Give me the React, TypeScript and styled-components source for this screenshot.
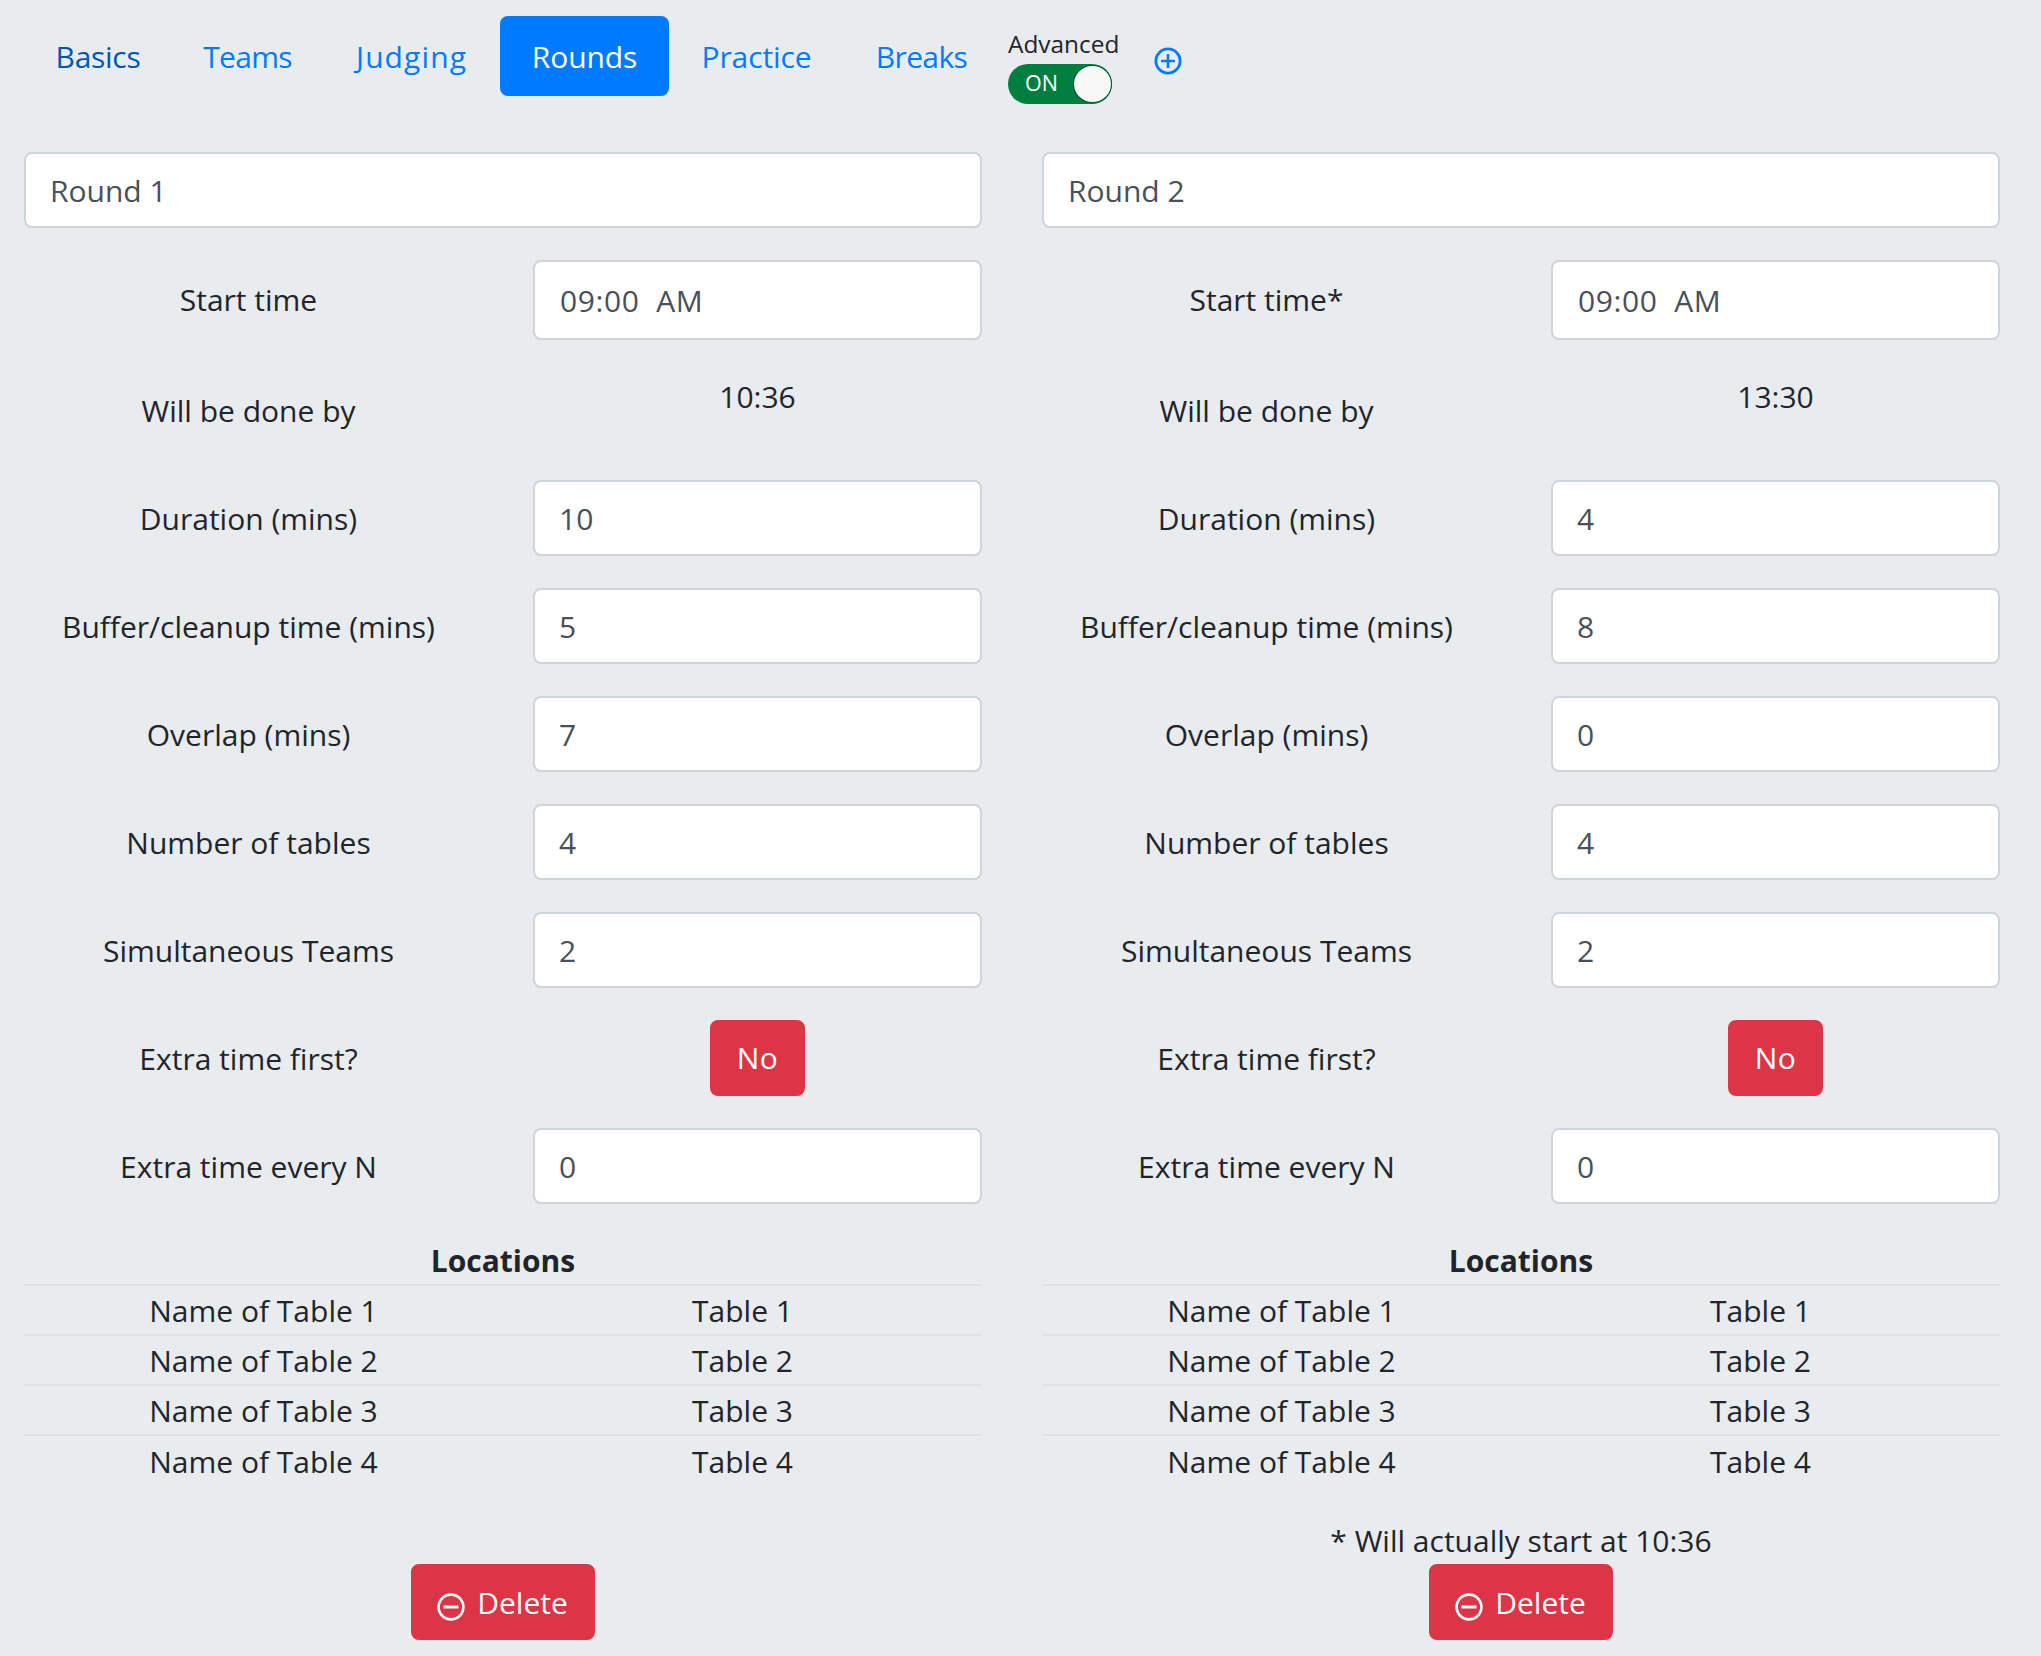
import React from "react";
import styled, { createGlobalStyle } from "styled-components";

const GlobalStyle = createGlobalStyle`
  html, body {
    margin: 0;
    padding: 0;
    background: #e9ecef;
  }
  body {
    font-family: "Open Sans", "Liberation Sans", sans-serif;
    font-size: 30px;
    line-height: 48px;
    color: #212529;
  }
  * {
    box-sizing: border-box;
  }
`;

const Page = styled.div`
  width: 2041px;
  height: 1656px;
  padding: 16px 41px 0 24px;
  overflow: hidden;
`;

const Nav = styled.nav`
  display: flex;
  align-items: flex-start;
  height: 80px;
  margin-bottom: 56px;
`;

const NavLink = styled.a<{ $active?: boolean; $hover?: boolean; $width: number; $tracking: number }>`
  display: block;
  width: ${(p) => p.$width}px;
  height: 80px;
  padding-top: 17px;
  border-radius: 8px;
  text-align: center;
  text-decoration: none;
  letter-spacing: ${(p) => p.$tracking}px;
  background: ${(p) => (p.$active ? "#007bff" : "transparent")};
  color: ${(p) => (p.$active ? "#fff" : p.$hover ? "#0056b3" : "#007bff")};
`;

const AdvancedBox = styled.div`
  display: flex;
  flex-direction: column;
  align-items: flex-start;
  margin-left: 9px;
  width: 146px;
`;

const AdvancedLabel = styled.span`
  font-size: 24.4px;
  line-height: 36px;
  margin-top: 10px;
  margin-bottom: 2px;
`;

const Toggle = styled.div`
  position: relative;
  width: 104px;
  height: 40px;
  border-radius: 20px;
  background: #007e3f;
  color: #fff;
  font-size: 21.5px;
  line-height: 38px;
  padding-left: 17px;
`;

const Knob = styled.span`
  position: absolute;
  top: 2px;
  right: 1px;
  width: 37px;
  height: 36px;
  border-radius: 50%;
  background: #f8f8f8;
  box-shadow: 0 0 0 1px #00582c;
`;

const AddIcon = styled.svg`
  width: 28px;
  height: 28px;
  margin-top: 31px;
  color: #007bff;
`;

const Columns = styled.div`
  display: grid;
  grid-template-columns: 958px 958px;
  column-gap: 60px;
`;

const Column = styled.section`
  display: flex;
  flex-direction: column;
`;

const Input = styled.input<{ $tall?: boolean }>`
  display: block;
  width: 100%;
  height: ${(p) => (p.$tall ? "80px" : "76px")};
  padding: 12px 24px;
  border: 2px solid #ced4da;
  border-radius: 8px;
  background: #fff;
  color: #495057;
  font: inherit;
  outline: none;
`;

const TitleInput = styled(Input)`
  margin-bottom: 32px;
`;

const TimeInput = styled(Input)`
  padding-left: 25px;
  letter-spacing: 0.6px;
`;

const FieldRow = styled.div`
  display: grid;
  grid-template-columns: 449px 449px;
  column-gap: 60px;
  min-height: 76px;
  margin-bottom: 32px;
`;

const FieldLabel = styled.label`
  align-self: center;
  padding-top: 2px;
  text-align: center;
`;

const StartLabel = styled(FieldLabel)`
  padding-top: 0;
`;

const FieldValue = styled.div`
  padding-top: 1px;
  text-align: center;
`;

const DangerButton = styled.button`
  display: inline-flex;
  align-items: center;
  justify-content: center;
  gap: 12px;
  height: 76px;
  padding: 2px 25px 0 24px;
  border: 2px solid #dc3545;
  border-radius: 8px;
  background: #dc3545;
  color: #fff;
  font: inherit;
`;

const ToggleButton = styled(DangerButton)`
  width: 95px;
  padding: 0;
  letter-spacing: 0.5px;
`;

const Centered = styled.div`
  text-align: center;
`;

const Table = styled.table`
  width: 100%;
  table-layout: fixed;
  border-collapse: collapse;
  margin-bottom: 32px;

  th {
    height: 49px;
    padding: 2px 0 0;
    line-height: 46px;
    font-weight: 700;
    text-align: center;
  }

  td {
    height: 50px;
    padding: 2px 0 0;
    line-height: 46px;
    text-align: center;
    border-top: 2px solid #dee2e6;
  }
`;

const Note = styled.div`
  height: 47px;
  text-align: center;
`;

const DeleteIcon = styled.svg`
  width: 28px;
  height: 28px;
  margin-top: 8px;
`;

function PlusCircle() {
  return (
    <AddIcon viewBox="0 0 28 28" fill="none" stroke="currentColor" strokeWidth="2.8">
      <circle cx="14" cy="14" r="12.1" />
      <path d="M14 7v14M7 14h14" strokeWidth="2.6" />
    </AddIcon>
  );
}

function MinusCircle() {
  return (
    <DeleteIcon viewBox="0 0 28 28" fill="none" stroke="currentColor" strokeWidth="2.6">
      <circle cx="14" cy="14" r="12.4" />
      <path d="M6.5 14h15" strokeWidth="3" />
    </DeleteIcon>
  );
}

type Round = {
  name: string;
  startLabel: string;
  doneBy: string;
  duration: string;
  buffer: string;
  overlap: string;
  note?: string;
};

const rounds: Round[] = [
  { name: "Round 1", startLabel: "Start time", doneBy: "10:36", duration: "10", buffer: "5", overlap: "7" },
  {
    name: "Round 2",
    startLabel: "Start time*",
    doneBy: "13:30",
    duration: "4",
    buffer: "8",
    overlap: "0",
    note: "* Will actually start at 10:36",
  },
];

const tabs = [
  { label: "Basics", width: 148, tracking: -0.3, hover: true },
  { label: "Teams", width: 151, tracking: -0.7 },
  { label: "Judging", width: 177, tracking: 1.1 },
  { label: "Rounds", width: 169, tracking: -0.1, active: true },
  { label: "Practice", width: 175, tracking: -0.1 },
  { label: "Breaks", width: 155, tracking: -0.6 },
];

function NumberField({ label, value }: { label: string; value: string }) {
  return (
    <FieldRow>
      <FieldLabel>{label}</FieldLabel>
      <Input readOnly value={value} />
    </FieldRow>
  );
}

function RoundCard({ round }: { round: Round }) {
  return (
    <Column>
      <TitleInput readOnly value={round.name} />
      <FieldRow>
        <StartLabel>{round.startLabel}</StartLabel>
        <TimeInput $tall readOnly value="09:00  AM" />
      </FieldRow>
      <FieldRow>
        <FieldLabel>Will be done by</FieldLabel>
        <FieldValue>{round.doneBy}</FieldValue>
      </FieldRow>
      <NumberField label="Duration (mins)" value={round.duration} />
      <NumberField label="Buffer/cleanup time (mins)" value={round.buffer} />
      <NumberField label="Overlap (mins)" value={round.overlap} />
      <NumberField label="Number of tables" value="4" />
      <NumberField label="Simultaneous Teams" value="2" />
      <FieldRow>
        <FieldLabel>Extra time first?</FieldLabel>
        <Centered>
          <ToggleButton>No</ToggleButton>
        </Centered>
      </FieldRow>
      <NumberField label="Extra time every N" value="0" />
      <Table>
        <thead>
          <tr>
            <th colSpan={2}>Locations</th>
          </tr>
        </thead>
        <tbody>
          {[1, 2, 3, 4].map((n) => (
            <tr key={n}>
              <td>Name of Table {n}</td>
              <td>Table {n}</td>
            </tr>
          ))}
        </tbody>
      </Table>
      <Note>{round.note}</Note>
      <Centered>
        <DangerButton>
          <MinusCircle />
          Delete
        </DangerButton>
      </Centered>
    </Column>
  );
}

export default function App() {
  return (
    <Page>
      <GlobalStyle />
      <Nav>
        {tabs.map((t) => (
          <NavLink key={t.label} href="#" $width={t.width} $tracking={t.tracking} $active={t.active} $hover={t.hover}>
            {t.label}
          </NavLink>
        ))}
        <AdvancedBox>
          <AdvancedLabel>Advanced</AdvancedLabel>
          <Toggle>
            ON
            <Knob />
          </Toggle>
        </AdvancedBox>
        <PlusCircle />
      </Nav>
      <Columns>
        {rounds.map((r) => (
          <RoundCard key={r.name} round={r} />
        ))}
      </Columns>
    </Page>
  );
}
